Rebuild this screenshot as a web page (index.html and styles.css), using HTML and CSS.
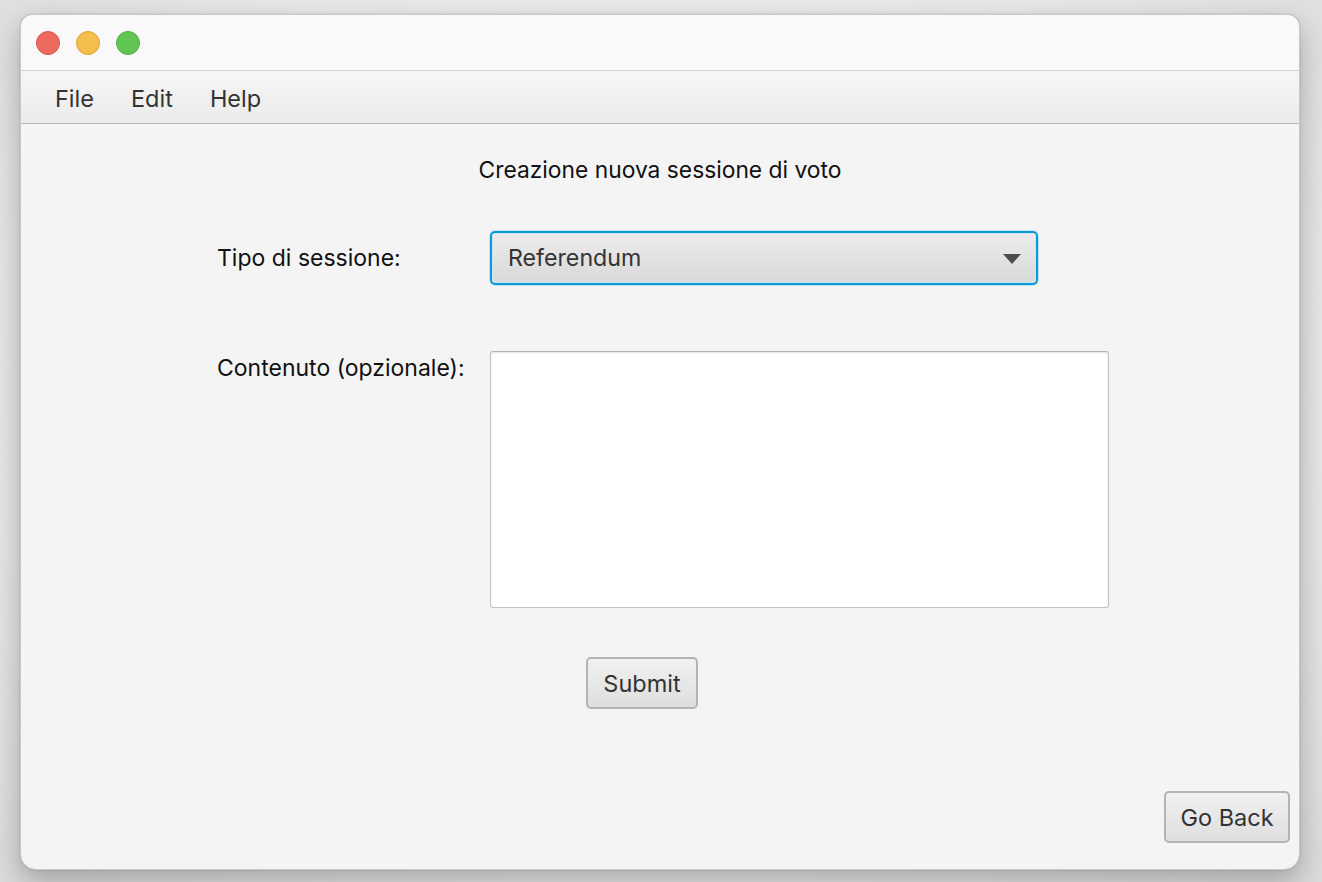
FILE: index.html
```html
<!DOCTYPE html>
<html lang="it">
<head>
<meta charset="utf-8">
<title>Creazione nuova sessione di voto</title>
<link rel="stylesheet" href="styles.css">
</head>
<body>
<div class="window">
  <div class="titlebar">
    <span class="light red"></span>
    <span class="light yellow"></span>
    <span class="light green"></span>
  </div>
  <div class="menubar">
    <span class="menu">File</span>
    <span class="menu">Edit</span>
    <span class="menu">Help</span>
  </div>
  <div class="content">
    <div class="heading">Creazione nuova sessione di voto</div>
    <div class="form">
      <div class="label label-combo">Tipo di sessione:</div>
      <div class="combo">
        <span class="combo-text">Referendum</span>
        <svg class="arrow" width="18" height="10" viewBox="0 0 18 10"><path d="M0 0 L18 0 L9 10 Z" fill="#4d4d4d"/></svg>
      </div>
      <div class="label label-area">Contenuto (opzionale):</div>
      <div class="textarea"></div>
    </div>
    <div class="submit-row">
      <button class="btn submit">Submit</button>
    </div>
    <div class="footer">
      <button class="btn back">Go Back</button>
    </div>
  </div>
</div>
</body>
</html>
```
FILE: styles.css
```css
* { box-sizing: border-box; }
html, body { margin: 0; padding: 0; }
body {
  width: 1322px;
  height: 882px;
  background: radial-gradient(ellipse at 50% 45%, #f4f4f4 0%, #e8e8e8 70%, #dcdcdc 100%);
  font-family: Inter, "Noto Sans", "Liberation Sans", sans-serif;
  overflow: hidden;
  padding: 14px 0 0 20px;
}
.window {
  width: 1280px;
  height: 856px;
  border-radius: 13px 13px 16px 16px;
  border: 1px solid #c9c9c9;
  background: #f4f4f4;
  box-shadow: 0 12px 30px rgba(0,0,0,0.28), 0 0 2px rgba(0,0,0,0.2);
  display: flex;
  flex-direction: column;
  overflow: hidden;
}
.titlebar {
  height: 56px;
  background: #f9f8fa;
  border-bottom: 1px solid #d6d6d6;
  display: flex;
  align-items: center;
  gap: 16px;
  padding-left: 15px;
  flex: none;
}
.light {
  width: 24px;
  height: 24px;
  border-radius: 50%;
  display: block;
}
.red { background: #ee6a5e; border: 1px solid #d9534a; }
.yellow { background: #f5bf4f; border: 1px solid #dea235; }
.green { background: #61c554; border: 1px solid #4ead40; }
.menubar {
  height: 53px;
  background: linear-gradient(#f6f6f6, #ebebeb);
  border-bottom: 1px solid #b9b9b9;
  display: flex;
  align-items: center;
  gap: 37px;
  padding-left: 34px;
  padding-top: 2px;
  flex: none;
}
.menu {
  font-size: 23.5px;
  color: #333;
}
.content {
  flex: 1;
  display: flex;
  flex-direction: column;
  color: #111;
}
.heading {
  text-align: center;
  font-size: 22.8px;
  margin-top: 33px;
  line-height: 26px;
}
.form {
  display: grid;
  grid-template-columns: 273px 619px;
  padding-left: 196px;
  margin-top: 48px;
  row-gap: 66px;
}
.label {
  font-size: 23px;
  line-height: 26px;
}
.label-combo { align-self: center; }
.label-area { padding-top: 4px; }
.combo {
  width: 548px;
  height: 54px;
  border: 2px solid #0a9bd6;
  border-radius: 5px;
  box-shadow: 0 0 0 1px #bfe3f2, inset 0 0 0 1px #cfe6f0;
  background: linear-gradient(#ececec, #d9d9d9);
  display: flex;
  align-items: center;
  justify-content: space-between;
  padding: 0 15px 0 16px;
}
.combo-text {
  font-size: 23.2px;
  color: #333;
}
.arrow { display: block; margin-top: 1px; }
.textarea {
  width: 619px;
  height: 257px;
  background: #fff;
  border: 1px solid #c3c3c3;
  border-top-color: #b3b3b3;
  border-radius: 3px;
  box-shadow: inset 0 1px 2px rgba(0,0,0,0.12);
}
.submit-row {
  padding-left: 565px;
  margin-top: 49px;
}
.btn {
  font-family: inherit;
  font-size: 23.5px;
  color: #333;
  background: linear-gradient(#f1f1f1, #dedede);
  border: 2px solid #b4b4b4;
  border-radius: 5px;
  height: 52px;
  padding: 0;
  display: block;
}
.submit { width: 112px; }
.footer {
  margin-top: auto;
  display: flex;
  justify-content: flex-end;
  padding: 0 9px 26px 0;
}
.back { width: 126px; }
```
